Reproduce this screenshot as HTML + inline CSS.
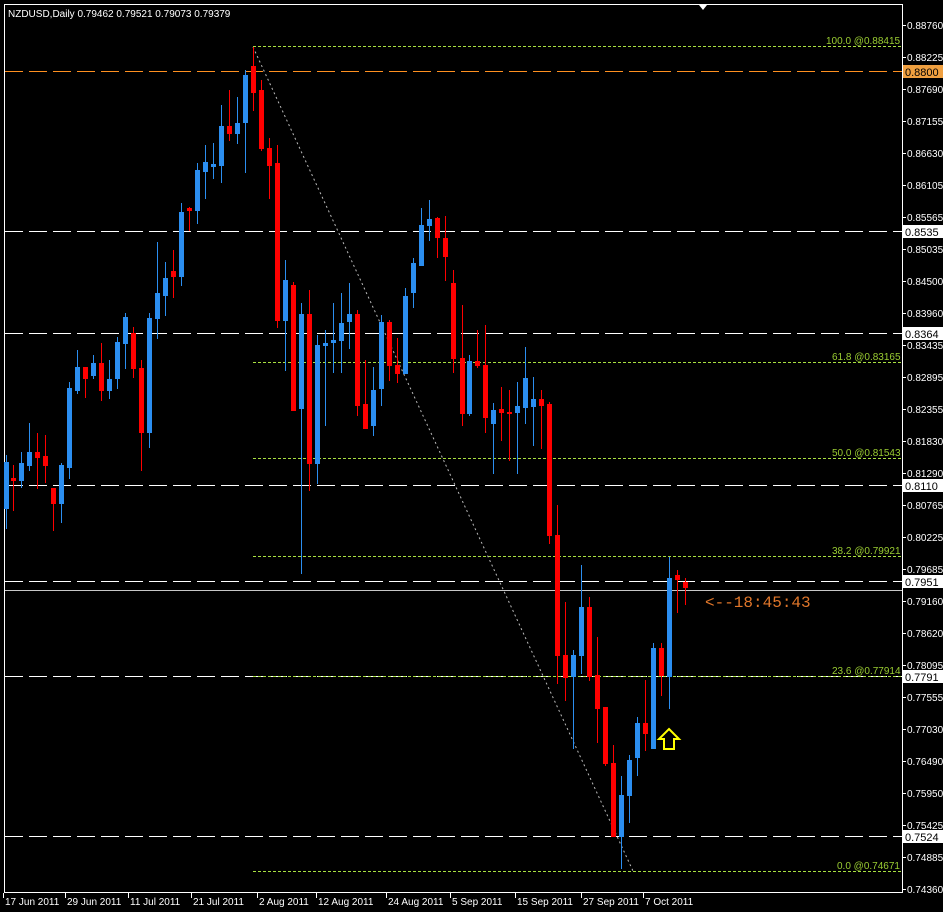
<!DOCTYPE html>
<html><head><meta charset="utf-8"><style>
html,body{margin:0;padding:0;background:#000;width:943px;height:912px;overflow:hidden}
svg{display:block}
text{font-family:"Liberation Sans",sans-serif;font-size:10px;fill:#fff}
</style></head><body>
<svg id="s" width="943" height="912" viewBox="0 0 943 912" xmlns="http://www.w3.org/2000/svg">
<rect width="943" height="912" fill="#000"/>
<rect x="4.5" y="4.5" width="898" height="888" fill="none" stroke="#fff" stroke-width="1"/>
<polygon points="699,5 707,5 703,10" fill="#fff"/>
<text x="8" y="17" font-size="11">NZDUSD,Daily  0.79462 0.79521 0.79073 0.79379</text>
<g id="lines"></g>
<g id="c"></g>
<text x="705" y="607" style="font-family:'Liberation Mono',monospace;font-size:16px;fill:#e0762a">&lt;--18:45:43</text>
<polygon points="669,729 679,739 674,739 674,749 664,749 664,739 659,739" fill="none" stroke="#ffff00" stroke-width="2"/>
<g>
<text x="826" y="44" style="fill:#9acd32">100.0 @0.88415</text>
<text x="832" y="360" style="fill:#9acd32">61.8 @0.83165</text>
<text x="832" y="456" style="fill:#9acd32">50.0 @0.81543</text>
<text x="832" y="554" style="fill:#9acd32">38.2 @0.79921</text>
<text x="832" y="674" style="fill:#9acd32">23.6 @0.77914</text>
<text x="837" y="869" style="fill:#9acd32">0.0 @0.74671</text>
</g>
<g id="ax"></g>
<g id="dt"></g>
</svg>
<script>
var NS="http://www.w3.org/2000/svg";
function el(p,t,a,txt){var e=document.createElementNS(NS,t);for(var k in a)e.setAttribute(k,a[k]);if(txt!==undefined)e.textContent=txt;document.getElementById(p).appendChild(e);return e;}
el("lines","line",{x1:5,x2:902,y1:71.5,y2:71.5,stroke:"#ff9020","stroke-dasharray":"18,6"});
[231,333,485,581,676,836].forEach(function(y){el("lines","line",{x1:5,x2:902,y1:y+.5,y2:y+.5,stroke:"#fff","stroke-dasharray":"18,6"});});
el("lines","line",{x1:5,x2:902,y1:590.5,y2:590.5,stroke:"#c8c8c8"});
[46,362,458,556,676,871].forEach(function(y){el("lines","line",{x1:253,x2:902,y1:y+.5,y2:y+.5,stroke:"#a8e040","stroke-dasharray":"3,2"});});
el("lines","line",{x1:253,y1:47,x2:633,y2:871,stroke:"#bbb","stroke-dasharray":"2,3"});
var C=[[6,462,508,455,528,'b'],[13,478,480,465,510,'r'],[21,463,480,452,487,'b'],[29,452,465,423,470,'b'],[37,452,457,433,488,'r'],[45,456,465,435,482,'r'],[53,488,503,488,530,'r'],[61,465,503,463,522,'b'],[69,388,467,382,478,'b'],[77,367,390,350,393,'b'],[85,367,378,367,397,'r'],[93,363,375,355,378,'b'],[101,363,390,343,400,'r'],[109,379,390,360,398,'b'],[117,342,378,337,388,'b'],[125,317,343,313,368,'b'],[133,333,368,327,377,'r'],[141,368,432,360,470,'r'],[149,318,432,313,447,'b'],[157,293,318,242,338,'b'],[165,278,295,262,315,'b'],[173,271,276,250,297,'r'],[181,212,276,203,285,'b'],[189,208,210,207,230,'r'],[197,170,210,163,223,'b'],[205,162,171,145,198,'b'],[213,164,166,143,178,'b'],[221,126,165,105,182,'b'],[229,126,133,90,140,'r'],[237,123,133,97,143,'b'],[245,75,122,70,172,'b'],[253,66,92,47,110,'r'],[261,90,148,80,150,'r'],[269,148,165,138,198,'r'],[277,163,320,145,327,'r'],[285,280,320,260,370,'b'],[293,285,410,282,410,'r'],[301,314,408,303,573,'b'],[309,314,463,290,490,'r'],[317,345,463,335,483,'b'],[325,343,345,330,425,'b'],[333,340,342,303,372,'b'],[341,323,340,293,372,'b'],[349,314,321,283,348,'b'],[357,314,405,310,415,'r'],[365,404,428,360,428,'r'],[373,390,425,367,435,'b'],[381,322,388,315,405,'b'],[389,322,365,320,380,'r'],[397,365,373,338,382,'r'],[405,296,373,288,373,'b'],[413,263,292,258,307,'b'],[421,225,265,208,265,'b'],[429,219,225,200,240,'b'],[437,218,237,217,257,'r'],[445,238,256,216,280,'r'],[453,283,358,270,372,'r'],[462,358,413,305,425,'r'],[469,361,413,355,415,'b'],[477,361,365,330,367,'r'],[485,365,417,325,432,'r'],[493,410,423,403,473,'b'],[501,409,412,387,440,'r'],[509,412,413,390,460,'r'],[517,406,412,382,473,'b'],[525,378,407,347,423,'b'],[533,399,406,377,445,'b'],[541,399,405,390,448,'r'],[549,404,535,402,543,'r'],[557,535,655,505,683,'r'],[565,655,677,602,700,'r'],[573,655,676,650,748,'b'],[581,607,655,565,673,'b'],[589,607,676,597,680,'r'],[597,675,708,637,742,'r'],[605,707,763,707,765,'r'],[613,763,836,745,836,'r'],[621,795,836,776,868,'b'],[629,760,795,755,822,'b'],[637,723,757,717,775,'b'],[645,723,733,680,750,'r'],[653,648,748,643,748,'b'],[661,648,675,643,695,'r'],[669,578,676,557,708,'b'],[677,575,579,570,612,'r'],[685,582,587,578,604,'r']];
C.forEach(function(c){var col=c[5]=='b'?'#2b8ef0':'#ff0000';
el("c","line",{x1:c[0]+.5,x2:c[0]+.5,y1:c[3],y2:c[4]+1,stroke:col});
el("c","rect",{x:c[0]-2,y:c[1],width:5,height:Math.max(1,c[2]-c[1]+1),fill:col});});
var L=["0.88760","0.88225","0.87690","0.87155","0.86630","0.86105","0.85565","0.85035","0.84500","0.83960","0.83435","0.82895","0.82355","0.81830","0.81290","0.80765","0.80225","0.79685","0.79160","0.78620","0.78095","0.77555","0.77030","0.76490","0.75950","0.75425","0.74885","0.74360"];
L.forEach(function(t,i){var y=25+i*32;el("ax","line",{x1:902,x2:906,y1:y+.5,y2:y+.5,stroke:"#fff"});el("ax","text",{x:907,y:y+4},t);});
[[71,"0.8800","#f0a040"],[231,"0.8535","#fff"],[333,"0.8364","#fff"],[485,"0.8110","#fff"],[581,"0.7951","#fff"],[676,"0.7791","#fff"],[836,"0.7524","#fff"]].forEach(function(b){
el("ax","rect",{x:903,y:b[0]-6,width:40,height:13,fill:b[2]});
el("ax","text",{x:905,y:b[0]+5,style:"fill:#000;font-size:11px"},b[1]);});
[[5,"17 Jun 2011"],[67,"29 Jun 2011"],[130,"11 Jul 2011"],[193,"21 Jul 2011"],[259,"2 Aug 2011"],[318,"12 Aug 2011"],[388,"24 Aug 2011"],[452,"5 Sep 2011"],[517,"15 Sep 2011"],[583,"27 Sep 2011"],[645,"7 Oct 2011"]].forEach(function(d){
el("dt","line",{x1:d[0]-1.5,x2:d[0]-1.5,y1:893,y2:898,stroke:"#fff"});
el("dt","text",{x:d[0],y:905},d[1]);});
</script>
</body></html>
